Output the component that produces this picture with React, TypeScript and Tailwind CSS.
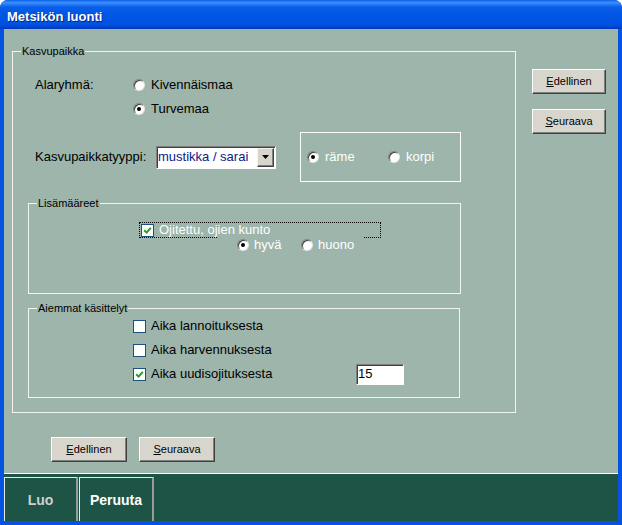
import React from 'react';

const panel = 'bg-[#9db5ab]';

const Radio: React.FC<{ checked?: boolean }> = ({ checked }) => (
  <span className="flex h-[12px] w-[12px] shrink-0 items-center justify-center rounded-full border border-t-[#808080] border-l-[#808080] border-r-[#e4e4e4] border-b-[#e4e4e4] bg-white shadow-[inset_1px_1px_0_#404040]">
    {checked && <span className="h-[4px] w-[4px] rounded-full bg-black" />}
  </span>
);

const Check: React.FC<{ checked?: boolean }> = ({ checked }) => (
  <span className="flex h-[13px] w-[13px] shrink-0 items-center justify-center border border-[#1c5180] bg-white">
    {checked && (
      <svg width="9" height="9" viewBox="0 0 9 9">
        <path d="M1.2 4.2 L3.6 6.6 L7.8 1.8" stroke="#21a121" strokeWidth="2" fill="none" />
      </svg>
    )}
  </span>
);

const Btn: React.FC<{ label: string; w: string }> = ({ label, w }) => (
  <button
    className={`flex h-[25px] ${w} items-center justify-center border border-t-white border-l-white border-r-[#404040] border-b-[#404040] bg-[#d8d6cc] text-[11px] leading-[13px] text-black shadow-[inset_-1px_-1px_0_#808080]`}
  >
    <span>
      <span className="underline">{label[0]}</span>
      {label.slice(1)}
    </span>
  </button>
);

const App: React.FC = () => {
  return (
    <div className="flex h-[525px] w-[622px] flex-col overflow-hidden rounded-t-[8px] bg-[#0553e1] font-['Liberation_Sans',Arial,sans-serif] text-[13px] leading-[16px] text-black">
      {/* title bar */}
      <div className="flex h-[29px] shrink-0 items-center bg-[linear-gradient(to_bottom,#0a5fe8_0%,#3c8ffd_9%,#0a5ee9_24%,#0055e5_50%,#0054e3_80%,#0048d4_92%,#0036b9_100%)] pl-[7px] pt-[5px]">
        <span className="text-[13px] font-bold text-white [text-shadow:1px_1px_0_#0a246a]">Metsikön luonti</span>
      </div>

      <div className={`mx-[4px] flex h-[492px] flex-col ${panel}`}>
        <div className="flex h-[444px]">
          <div className="pl-[8px] pt-[16px]">
            <fieldset className="h-[368px] w-[504px] border border-[#f4f4ee]">
              <legend className="ml-[8px] px-[1px] text-[11px] leading-[13px]">Kasvupaikka</legend>

              <div className="ml-[22px] mt-[17px] flex">
                <span className="w-[98px] leading-[20px]">Alaryhmä:</span>
                <div className="flex flex-col gap-[4px]">
                  <div className="flex h-[20px] items-center gap-[6px]">
                    <Radio />
                    <span>Kivennäismaa</span>
                  </div>
                  <div className="flex h-[20px] items-center gap-[6px]">
                    <Radio checked />
                    <span>Turvemaa</span>
                  </div>
                </div>
              </div>

              <div className="ml-[22px] mt-[13px] flex items-center">
                <span className="w-[121px]">Kasvupaikkatyyppi:</span>
                <div className="flex h-[23px] w-[120px] items-center border border-t-[#808080] border-l-[#808080] border-r-white border-b-white bg-white pl-[1px] shadow-[inset_1px_1px_0_#404040]">
                  <span className="flex-1 text-[#0b1a8a]">mustikka / sarai</span>
                  <span className="mr-[1px] flex h-[19px] w-[17px] items-center justify-center border border-t-[#f4f4f0] border-l-[#f4f4f0] border-r-[#404040] border-b-[#404040] bg-[#d8d6cc] shadow-[inset_-1px_-1px_0_#808080]">
                    <svg width="7" height="4" viewBox="0 0 7 4">
                      <path d="M0 0 H7 L3.5 4 Z" fill="#000" />
                    </svg>
                  </span>
                </div>
                <div className="ml-[24px] flex h-[50px] w-[161px] items-center border border-white pl-[6px] text-white">
                  <div className="flex w-[81px] items-center gap-[6px]">
                    <Radio checked />
                    <span>räme</span>
                  </div>
                  <div className="flex items-center gap-[6px]">
                    <Radio />
                    <span>korpi</span>
                  </div>
                </div>
              </div>

              <fieldset className="ml-[15px] mt-[15px] h-[97px] w-[433px] border border-[#f4f4ee]">
                <legend className="ml-[8px] px-[1px] text-[11px] leading-[13px]">Lisämääreet</legend>
                <div className="ml-[110px] mt-[12px] flex h-[16px] w-[242px] items-center gap-[5px] border border-dotted border-black pl-[1px] text-white">
                  <Check checked />
                  <span>Ojitettu, ojien kunto</span>
                </div>
                <div className={`ml-[188px] -mt-[1px] flex h-[16px] w-[146px] items-center pl-[20px] text-white ${panel}`}>
                  <div className="flex w-[64px] items-center gap-[5px]">
                    <Radio checked />
                    <span>hyvä</span>
                  </div>
                  <div className="flex items-center gap-[5px]">
                    <Radio />
                    <span>huono</span>
                  </div>
                </div>
              </fieldset>

              <fieldset className="ml-[15px] mt-[8px] h-[96px] w-[432px] border border-[#f4f4ee]">
                <legend className="ml-[8px] px-[1px] text-[11px] leading-[13px]">Aiemmat käsittelyt</legend>
                <div className="ml-[104px] mt-[1px] flex flex-col gap-[4px]">
                  <div className="flex h-[20px] items-center gap-[5px]">
                    <Check />
                    <span>Aika lannoituksesta</span>
                  </div>
                  <div className="flex h-[20px] items-center gap-[5px]">
                    <Check />
                    <span>Aika harvennuksesta</span>
                  </div>
                  <div className="flex h-[20px] items-center gap-[5px]">
                    <Check checked />
                    <span className="w-[200px]">Aika uudisojituksesta</span>
                    <div className="flex h-[21px] w-[48px] items-center border border-t-[#808080] border-l-[#808080] border-r-white border-b-white bg-white pl-[1px] shadow-[inset_1px_1px_0_#404040]">
                      15
                    </div>
                  </div>
                </div>
              </fieldset>
            </fieldset>

            <div className="ml-[39px] mt-[24px] flex gap-[12px]">
              <Btn label="Edellinen" w="w-[76px]" />
              <Btn label="Seuraava" w="w-[76px]" />
            </div>
          </div>

          <div className="ml-[16px] flex flex-col gap-[15px] pt-[40px]">
            <Btn label="Edellinen" w="w-[74px]" />
            <Btn label="Seuraava" w="w-[74px]" />
          </div>
        </div>

        <div className="h-[1px] bg-white" />

        <div className="flex h-[47px] bg-[#1d5446] pt-[3px]">
          <div className="flex h-[44px] w-[74px] items-center justify-center border-t border-l border-[#e8e8e8] border-r-2 border-r-[#9a9a9a] text-[14px] font-bold text-[#cfcfcf]">
            Luo
          </div>
          <div className="ml-[1px] flex h-[44px] w-[75px] items-center justify-center border-t border-l border-[#e8e8e8] border-r-2 border-r-[#9a9a9a] text-[14px] font-bold text-white">
            Peruuta
          </div>
        </div>
      </div>
    </div>
  );
};

export default App;
